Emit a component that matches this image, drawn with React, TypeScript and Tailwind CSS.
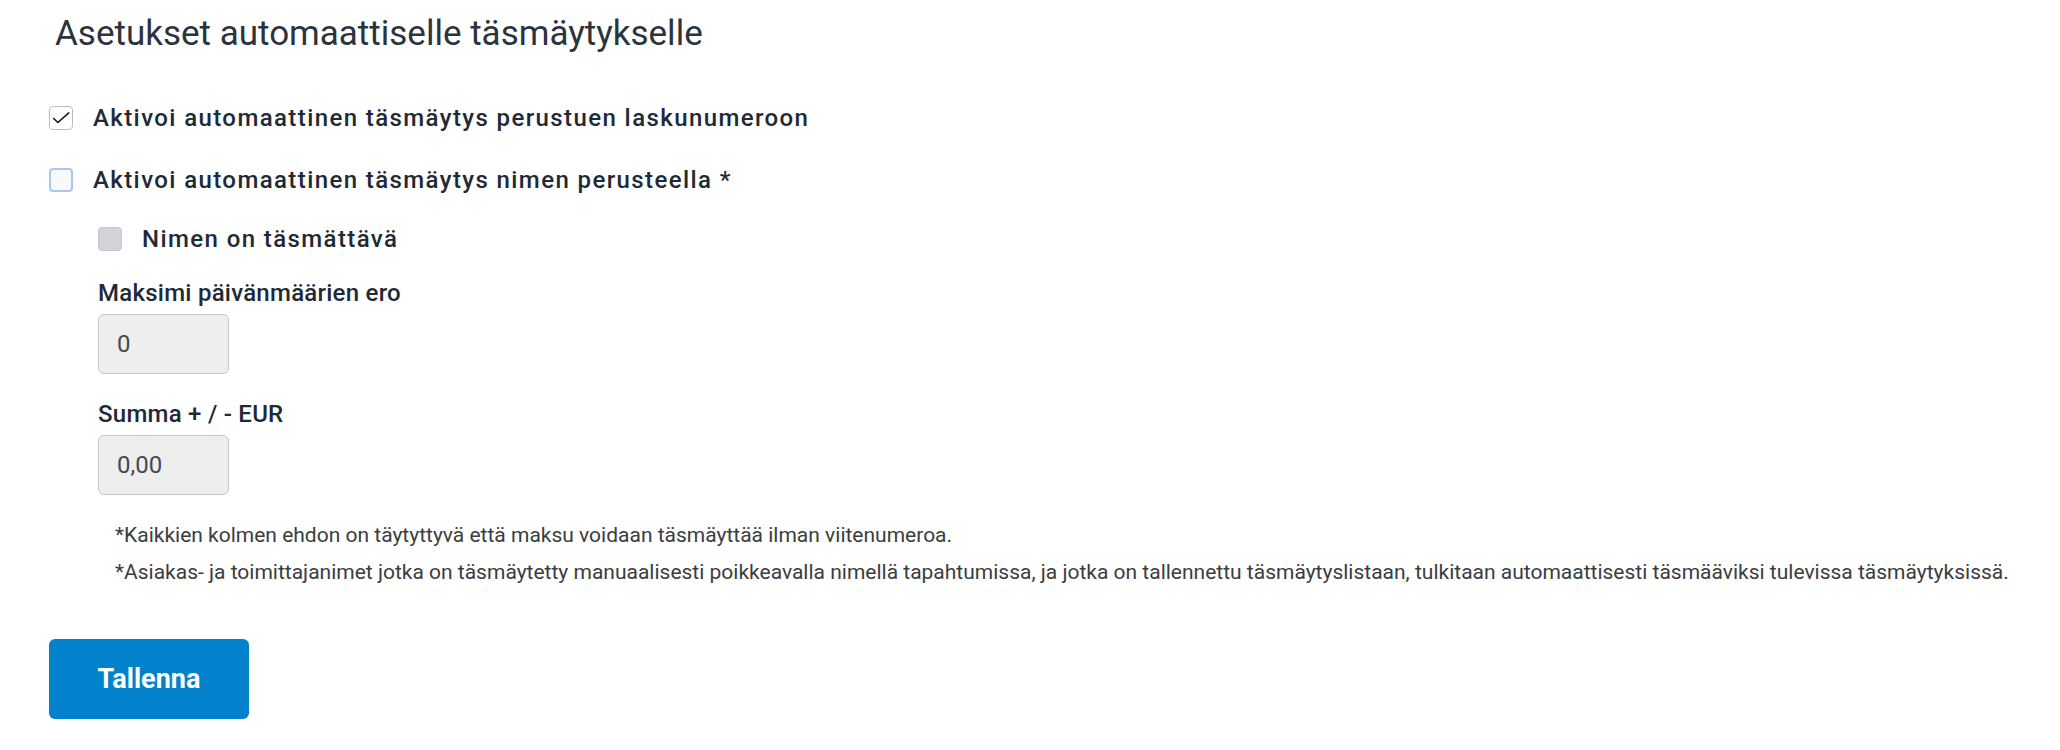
function CheckRow({
  label,
  state,
}: {
  label: string;
  state: "checked" | "empty" | "disabled";
}) {
  const box =
    state === "checked"
      ? "border border-[#bdbdbd] bg-white"
      : state === "empty"
        ? "border-2 border-[#a9c8ef] bg-[#f8f9fb]"
        : "bg-[#d1d5d9] border border-[#c4c8cc]";
  return (
    <label className="flex h-6 items-center gap-5">
      <span className={`flex size-6 shrink-0 items-center justify-center rounded-[4px] ${box}`}>
        {state === "checked" && (
          <svg viewBox="0 0 24 24" className="size-6" fill="none" stroke="#111" strokeWidth={1.7}>
            <path d="M4 12.5l4.6 4.4L20.5 6.5" strokeLinecap="round" strokeLinejoin="round" />
          </svg>
        )}
      </span>
      <span className="text-[24px] leading-6 font-medium tracking-[1.4px] text-[#1e2a36]">
        {label}
      </span>
    </label>
  );
}

function Field({ label, value, top }: { label: string; value: string; top: string }) {
  return (
    <div className={top}>
      <div className="text-[24px] leading-7 font-medium tracking-[0.25px] text-[#1e2a36]">{label}</div>
      <div className="mt-[7px] flex h-[60px] w-[131px] items-center rounded-[6px] border border-[#c6c6c6] bg-[#eeeeee] px-[18px] text-[24px] text-[#444a50]">
        {value}
      </div>
    </div>
  );
}

export default function App() {
  return (
    <div className="min-h-[750px] bg-white pl-[49px] font-['Roboto',sans-serif]">
      <h1 className="pt-[14px] pl-[6px] text-[35px] leading-10 font-normal text-[#2b333d]">
        Asetukset automaattiselle täsmäytykselle
      </h1>

      <div className="mt-[52px] flex flex-col gap-[38px]">
        <CheckRow label="Aktivoi automaattinen täsmäytys perustuen laskunumeroon" state="checked" />
        <CheckRow label="Aktivoi automaattinen täsmäytys nimen perusteella *" state="empty" />
      </div>

      <div className="mt-[35px] pl-[49px]">
        <CheckRow label="Nimen on täsmättävä" state="disabled" />
        <Field label="Maksimi päivänmäärien ero" value="0" top="mt-[28px]" />
        <Field label="Summa + / - EUR" value="0,00" top="mt-[26px]" />

        <div className="mt-[22px] pl-[17px] text-[21px] leading-[37px] text-[#3a3d40]">
          <p>*Kaikkien kolmen ehdon on täytyttyvä että maksu voidaan täsmäyttää ilman viitenumeroa.</p>
          <p>
            *Asiakas- ja toimittajanimet jotka on täsmäytetty manuaalisesti poikkeavalla nimellä tapahtumissa, ja jotka on
            tallennettu täsmäytyslistaan, tulkitaan automaattisesti täsmääviksi tulevissa täsmäytyksissä.
          </p>
        </div>
      </div>

      <button className="mt-[48px] flex h-20 w-[200px] items-center justify-center rounded-[6px] bg-[#0281cc] text-[27px] leading-6 font-bold text-white">
        Tallenna
      </button>
    </div>
  );
}
